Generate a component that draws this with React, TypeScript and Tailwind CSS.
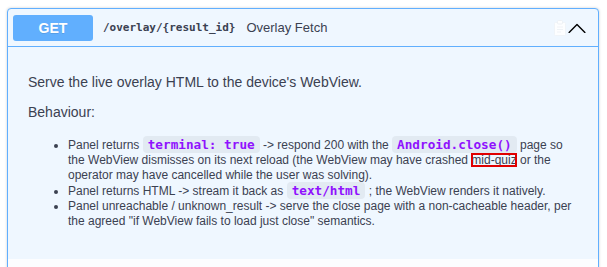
const mono = "font-['DejaVu_Sans_Mono','Liberation_Mono',monospace]";

function Code({ children }: { children: string }) {
    return (
        <code className={`${mono} text-[12.7px] font-bold text-[#9012fe] bg-black/5 rounded-[4px] px-[5px] py-[1px]`}>
            {children}
        </code>
    );
}

export default function App() {
    return (
        <div className="min-h-screen bg-white pt-[8px] pl-[7px] pr-[8px] font-['Liberation_Sans',Arial,sans-serif] text-[#3b4151]">
            <div className="rounded-[4px] border border-[#61affe] bg-[#eff7ff] shadow-[0_0_3px_rgba(0,0,0,0.19)] overflow-hidden">
                {/* Summary row */}
                <div className="flex items-center border-b border-[#61affe] pl-[5px] pr-[11px] pt-[6px] pb-[5px]">
                    <span className="w-[80px] h-[26px] shrink-0 rounded-[3px] bg-[#61affe] text-white text-[14px] font-bold flex items-center justify-center [text-shadow:0_1px_0_rgba(0,0,0,0.1)]">
                        GET
                    </span>
                    <span className={`${mono} ml-[10px] text-[11px] font-semibold`}>{'/overlay/{result_id}'}</span>
                    <span className="ml-[11px] text-[13px]">Overlay Fetch</span>
                    <div className="ml-auto flex items-center gap-[1px]">
                        {/* copy-to-clipboard, barely visible */}
                        <svg width="12" height="16" viewBox="0 0 12 16" className="opacity-90">
                            <rect x="0.5" y="2.5" width="11" height="13" rx="1" fill="#ffffff" stroke="#f1f4f8" />
                            <rect x="3.5" y="0.5" width="5" height="3.5" rx="1" fill="#ffffff" stroke="#eef1f5" />
                            <path d="M3 7h6M3 9.5h6M3 12h4" stroke="#f0f3f7" strokeWidth="1" />
                        </svg>
                        <svg width="20" height="20" viewBox="0 0 20 20">
                            <path
                                d="M17.418 14.908c.271.275.709.275.979 0a.707.707 0 0 0 0-.994L10.489 6.11a.686.686 0 0 0-.979 0L1.602 13.914a.707.707 0 0 0 0 .994c.27.275.709.275.979 0L10 7.5l7.418 7.408z"
                                fill="#000000"
                            />
                        </svg>
                    </div>
                </div>

                {/* Description */}
                <div className="px-[20px] pt-[25px] pb-[30px]">
                    <p className="text-[14px] leading-[20px] mb-[10px]">Serve the live overlay HTML to the device's WebView.</p>
                    <p className="text-[14px] leading-[20px] mb-[15px]">Behaviour:</p>
                    <ul className="list-disc pl-[40px] w-[550px] text-[12px] leading-[15px]">
                        <li>
                            Panel returns <Code>terminal: true</Code> -&gt; respond 200 with the <Code>Android.close()</Code> page so the
                            WebView dismisses on its next reload (the WebView may have crashed{' '}
                            <span className="outline-2 outline-[#e00000] -outline-offset-2">mid-quiz</span> or the operator may have
                            cancelled while the user was solving).
                        </li>
                        <li>
                            Panel returns HTML -&gt; stream it back as <Code>text/html</Code> ; the WebView renders it natively.
                        </li>
                        <li>
                            Panel unreachable / unknown_result -&gt; serve the close page with a non-cacheable header, per the agreed "if
                            WebView fails to load just close" semantics.
                        </li>
                    </ul>
                </div>

                {/* next section header (cut off) */}
                <div className="h-[30px] bg-white/80"></div>
            </div>
        </div>
    );
}
